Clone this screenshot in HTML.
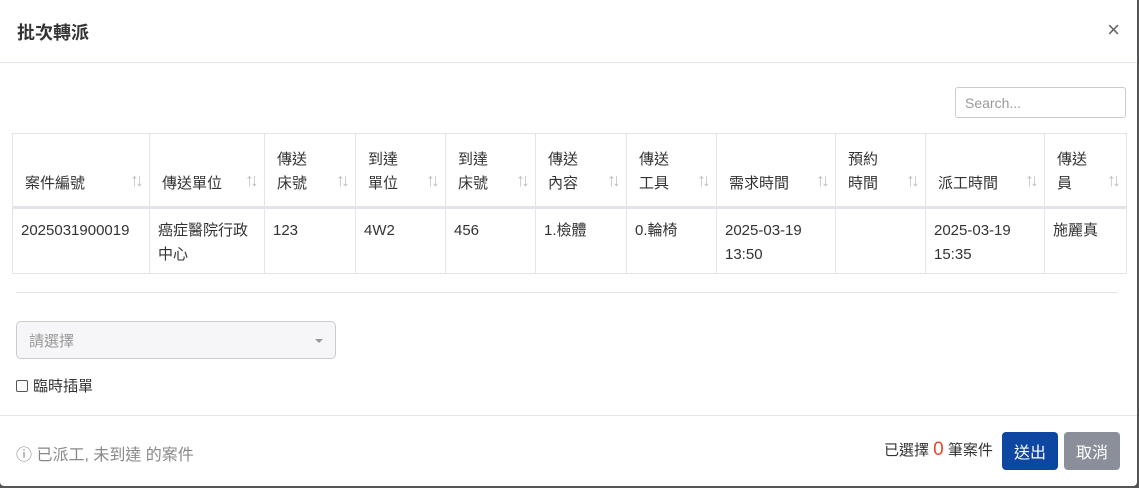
<!DOCTYPE html>
<html><head><meta charset="utf-8"><style>
*{box-sizing:border-box;margin:0;padding:0}
body{width:1139px;height:488px;background:#555;font-family:"Liberation Sans","Noto Sans CJK TC",sans-serif;color:#333;overflow:hidden;position:relative}
.modal{position:absolute;left:0;top:0;width:1137px;height:486px;background:#fff;border-radius:0 0 4px 4px}
.hd{height:63px;border-bottom:1px solid #e5e7ee;position:relative}
.hd h1{position:absolute;left:17px;top:19px;font-size:18px;font-weight:bold;color:#333}
.x{position:absolute;right:17px;top:17px;font-size:22px;color:#666}
.search{position:absolute;left:955px;top:87px;width:171px;height:31px;border:1px solid #ccc;border-radius:3px;font-size:14px;color:#999;padding:7px 9px}
table{position:absolute;left:12px;top:133px;border-collapse:collapse;font-size:15px}
td,th{border:1px solid #e3e3e8;text-align:left;vertical-align:top;font-weight:normal;line-height:24px;padding:0 8px}
th{height:74px;vertical-align:bottom;padding-bottom:10px;padding-left:12px;position:relative;border-bottom:3px solid #e3e3eb}
th span{position:absolute;right:9px;bottom:14px;color:#c0c0c0;font-size:18px;letter-spacing:-4px}
td{height:66px;padding-top:10px}
.hr{position:absolute;left:16px;top:292px;width:1102px;border-top:1px solid #e5e5e5}
.sel{position:absolute;left:16px;top:321px;width:320px;height:38px;border:1px solid #ccc;border-radius:5px;background:#f6f6f8;color:#999;font-size:15px;padding:8px 12px}
.sel:after{content:"";position:absolute;right:12px;top:17px;border:4px solid transparent;border-top-color:#999}
.cb{position:absolute;left:16px;top:375px;font-size:15px;display:flex;align-items:center;gap:5px}
.cb i{width:12px;height:12px;border:1px solid #555;border-radius:2px;display:inline-block}
.ft{position:absolute;left:0;top:415px;width:1137px;border-top:1px solid #e5e5e5}
.info{position:absolute;left:16px;top:441px;font-size:16px;color:#888}
.cnt{position:absolute;left:884px;top:439px;font-size:15px;color:#333}
.cnt b{color:#e5462b;font-size:19px;font-weight:normal}
.btn{position:absolute;top:432px;height:38px;border-radius:4px;color:#fff;font-size:16px;padding:7px 12px}
</style></head><body><div class="modal">
<div class="hd"><h1>批次轉派</h1><div class="x">×</div></div>
<div class="search">Search...</div>
<table><tr>
<th style="width:137px">案件編號<span>↑↓</span></th>
<th style="width:115px">傳送單位<span>↑↓</span></th>
<th style="width:91px">傳送<br>床號<span>↑↓</span></th>
<th style="width:90px">到達<br>單位<span>↑↓</span></th>
<th style="width:90px">到達<br>床號<span>↑↓</span></th>
<th style="width:91px">傳送<br>內容<span>↑↓</span></th>
<th style="width:90px">傳送<br>工具<span>↑↓</span></th>
<th style="width:119px">需求時間<span>↑↓</span></th>
<th style="width:90px">預約<br>時間<span>↑↓</span></th>
<th style="width:119px">派工時間<span>↑↓</span></th>
<th style="width:82px">傳送<br>員<span>↑↓</span></th>
</tr><tr>
<td>2025031900019</td><td>癌症醫院行政<br>中心</td><td>123</td><td>4W2</td><td>456</td><td>1.檢體</td><td>0.輪椅</td><td>2025-03-19<br>13:50</td><td></td><td>2025-03-19<br>15:35</td><td>施麗真</td>
</tr></table>
<div class="hr"></div>
<div class="sel">請選擇</div>
<div class="cb"><i></i>臨時插單</div>
<div class="ft"></div>
<div class="info">ⓘ 已派工, 未到達 的案件</div>
<div class="cnt">已選擇 <b>0</b> 筆案件</div>
<div class="btn" style="left:1002px;background:#0d47a1">送出</div>
<div class="btn" style="left:1064px;background:#8a8f99">取消</div>
</div></body></html>
